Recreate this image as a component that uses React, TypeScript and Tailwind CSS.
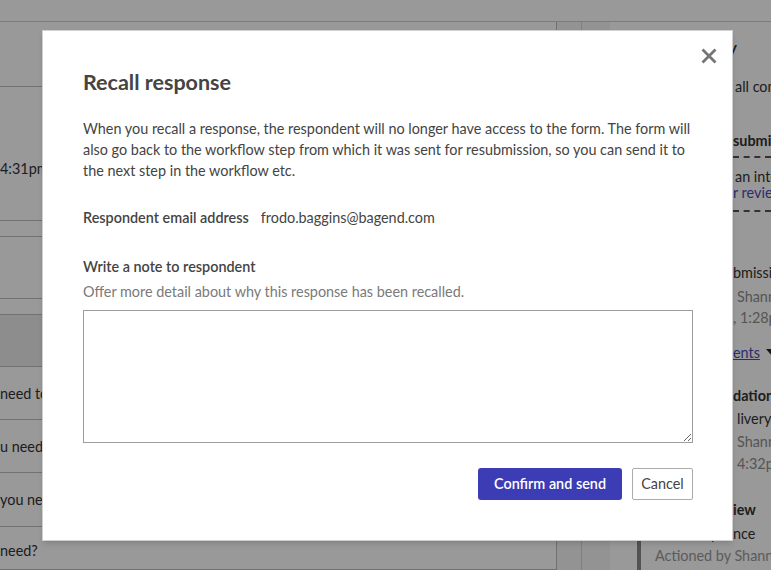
import React from "react";

const font = { fontFamily: "Lato, 'Open Sans', sans-serif" };

function Clip({ w, children }: { w: number; children: React.ReactNode }) {
  return (
    <span
      className="flex justify-end overflow-hidden whitespace-nowrap shrink-0"
      style={{ width: w }}
    >
      {children}
    </span>
  );
}

function LeftRow({ h, text, extra = "" }: { h: string; text?: string; extra?: string }) {
  return (
    <div className={`${h} shrink-0 bg-white border-b border-[#bdbdbd] flex ${extra}`}>
      <div className="whitespace-nowrap text-[14.4px] leading-[21px] text-[#333]">{text}</div>
    </div>
  );
}

function RRow({
  w = 123,
  pre,
  text,
  cls = "",
  mt,
  h = "h-[21px]",
  gap = "ml-0",
}: {
  w?: number;
  pre: string;
  text: React.ReactNode;
  cls?: string;
  mt: string;
  h?: string;
  gap?: string;
}) {
  return (
    <div className={`flex ${h} items-center ${mt} ${cls}`}>
      <Clip w={w}>{pre}</Clip>
      <span className={`whitespace-nowrap flex items-center ${gap}`}>{text}</span>
    </div>
  );
}

export default function App() {
  return (
    <div className="relative w-[771px] h-[570px] overflow-hidden bg-[#f5f5f5]" style={font}>
      {/* top bar */}
      <div className="h-[22px] bg-white border-b border-[#cfcfcf]" />
      <div className="flex h-[548px]">
        {/* left card */}
        <div className="w-[557px] shrink-0 bg-white border-r border-[#bdbdbd] flex flex-col">
          <div className="h-[65px] border-b border-[#bdbdbd] shrink-0" />
          <LeftRow h="h-[134px]" text="4:31pm" extra="items-end pb-[41px]" />
          <div className="h-[16px] border-b border-[#bdbdbd] shrink-0" />
          <div className="h-[62px] border-b border-[#bdbdbd] shrink-0" />
          <div className="h-[16px] border-b border-[#bdbdbd] shrink-0" />
          <div className="h-[52px] bg-[#ececec] border-b border-[#bdbdbd] shrink-0" />
          <LeftRow h="h-[53px]" text="need to respond?" extra="items-center" />
          <LeftRow h="h-[53px]" text="u need help with?" extra="items-center" />
          <LeftRow h="h-[54px]" text="you need to know?" extra="items-center" />
          <LeftRow h="h-[43px]" text="need?" extra="items-start pt-[13px]" />
        </div>
        {/* scrollbar column */}
        <div className="w-[25px] shrink-0 border-r border-[#d4d4d4] bg-[#f5f5f5]" />
        <div className="w-[28px] shrink-0" />
        {/* right card */}
        <div className="w-[161px] shrink-0 min-w-0 overflow-hidden bg-white text-[14.4px] text-[#333]">
          <div className="flex flex-col pt-[14px]">
            <RRow w={127} pre="Activity" text="" cls="font-bold text-[16px]" mt="mt-0" h="h-[22px]" />
            <RRow pre="View" text="all comments" mt="mt-[18px]" gap="ml-[2px]" />
            <RRow pre="Re" text="submission requested" cls="font-bold" mt="mt-[33px]" />
            <div className="ml-[123px] border-t-2 border-dashed border-[#555] mt-[5px]" />
            <RRow pre="This is" text="an internal note" mt="mt-[10px]" h="h-[18px]" gap="ml-[2px]" />
            <RRow pre="for you" text="r review" cls="text-[#4b4bb8]" mt="mt-0" h="h-[14px]" />
            <div className="ml-[123px] border-t-2 border-dashed border-[#555] mt-[10px]" />
            <RRow pre="Resu" text="bmission" mt="mt-[50px]" />
            <RRow pre="By" text="Shannon" cls="text-[#8e8e8e]" mt="mt-[3px]" gap="ml-[4px]" />
            <RRow pre="12 Jan" text=", 1:28pm" cls="text-[#8e8e8e]" mt="mt-0" />
            <RRow
              pre="Comm"
              text={
                <>
                  <span className="underline text-[#4b4bb8]">ents</span>
                  <svg width="12" height="8" viewBox="0 0 12 8" className="ml-[6px]">
                    <path d="M0 0 L12 0 L6 7 Z" fill="#222" />
                  </svg>
                </>
              }
              mt="mt-[14px]"
            />
            <RRow pre="Recommen" text="dation" cls="font-bold" mt="mt-[22px]" />
            <RRow pre="De" text="livery" mt="mt-[2px]" gap="ml-[4px]" />
            <RRow pre="By" text="Shannon" cls="text-[#8e8e8e]" mt="mt-[2px]" gap="ml-[4px]" />
            <RRow pre="12 Jan," text="4:32pm" cls="text-[#8e8e8e]" mt="mt-[1px]" gap="ml-[4px]" />
            <div className="ml-[27px] mt-[25px] border-l-4 border-[#8a8a8a] pl-[14px] pb-[20px]">
              <RRow w={78} pre="Rev" text="iew" cls="font-bold" mt="mt-0" />
              <RRow w={78} pre="Complia" text="nce" mt="mt-[3px]" />
              <div className="flex h-[21px] items-center mt-[1px] text-[#999] whitespace-nowrap">
                Actioned by Shannon
              </div>
            </div>
          </div>
        </div>
      </div>

      {/* overlay */}
      <div className="absolute inset-0 bg-black/40" />

      {/* modal */}
      <div className="absolute top-[30px] left-[42px] w-[691px] h-[511px] bg-white border border-[#d0d0d0] shadow-md pt-[37px] px-[40px] text-[#444]">
        <button className="absolute top-[16px] left-[657px] w-[18px] h-[18px] flex items-center justify-center">
          <svg width="16" height="16" viewBox="0 0 16 16">
            <path d="M1.5 1.5 L14.5 14.5 M14.5 1.5 L1.5 14.5" stroke="#757575" strokeWidth="2.8" strokeLinecap="butt" />
          </svg>
        </button>
        <h2 className="text-[21.5px] leading-[28px] font-bold text-[#444]">Recall response</h2>
        <p className="mt-[22px] text-[14.4px] leading-[21px] text-[#444]">
          When you recall a response, the respondent will no longer have access to the form. The form will
          <br />
          also go back to the workflow step from which it was sent for resubmission, so you can send it to
          <br />
          the next step in the workflow etc.
        </p>
        <div className="mt-[26px] flex gap-[12px] text-[14.4px] leading-[21px]">
          <span className="font-semibold text-[#444]">Respondent email address</span>
          <span className="text-[#444]">frodo.baggins@bagend.com</span>
        </div>
        <div className="mt-[28px] text-[14.4px] leading-[21px] font-semibold text-[#444]">
          Write a note to respondent
        </div>
        <div className="mt-[4px] text-[14.4px] leading-[21px] text-[#7a7a7a]">
          Offer more detail about why this response has been recalled.
        </div>
        <textarea className="mt-[8px] block w-[610px] h-[133px] border border-[#9e9e9e] rounded-none bg-white outline-none" />
        <div className="mt-[25px] flex justify-end gap-[10px] w-[610px]">
          <button className="h-[32px] w-[144px] bg-[#3c3cb4] text-white text-[14.4px] font-semibold rounded-[3px]">
            Confirm and send
          </button>
          <button className="h-[32px] w-[61px] bg-white border border-[#ababab] text-[#444] text-[14.4px] rounded-[2px]">
            Cancel
          </button>
        </div>
      </div>
    </div>
  );
}
